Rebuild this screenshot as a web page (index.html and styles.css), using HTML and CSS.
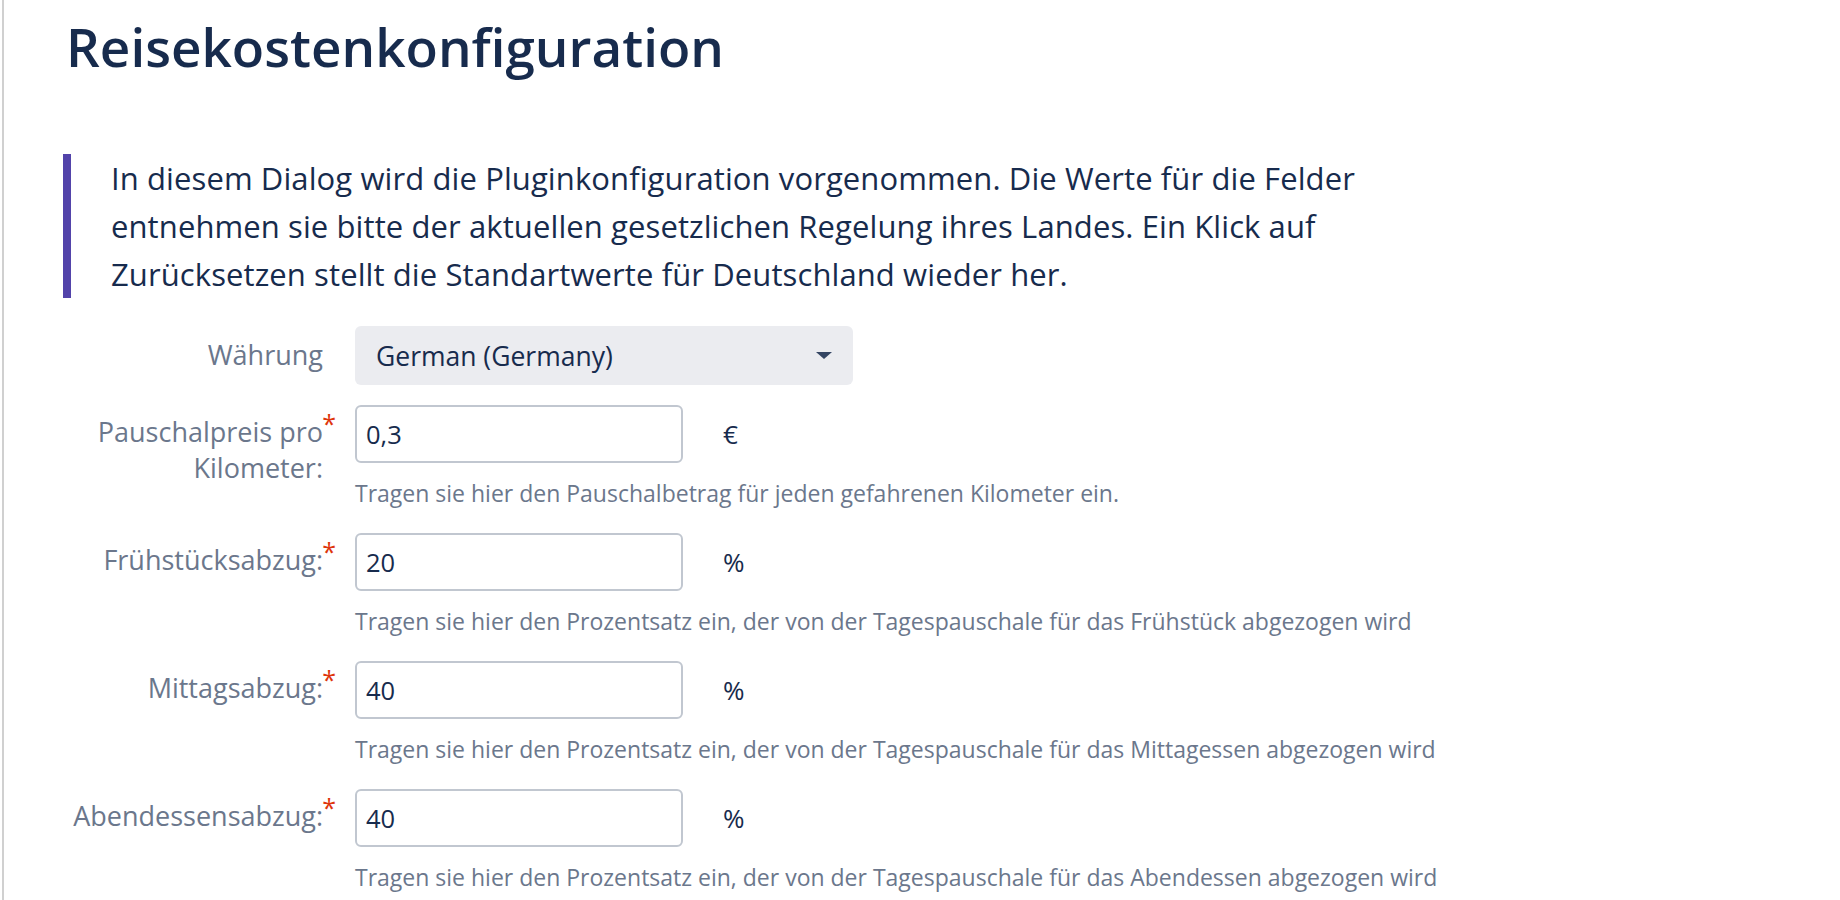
FILE: index.html
```html
<!DOCTYPE html>
<html lang="de">
<head>
<meta charset="utf-8">
<title>Reisekostenkonfiguration</title>
<link rel="stylesheet" href="styles.css">
</head>
<body>
<div class="page">
  <h1 class="title">Reisekostenkonfiguration</h1>
  <blockquote class="intro">
    <p>In diesem Dialog wird die Pluginkonfiguration vorgenommen. Die Werte für die Felder entnehmen sie bitte der aktuellen gesetzlichen Regelung ihres Landes. Ein Klick auf Zurücksetzen stellt die Standartwerte für Deutschland wieder her.</p>
  </blockquote>
  <form class="config">
    <div class="field field-select">
      <label class="label">Währung</label>
      <div class="control">
        <div class="select"><span class="select-value">German (Germany)</span><span class="caret"></span></div>
      </div>
    </div>
    <div class="field">
      <label class="label">Pauschalpreis pro Kilometer:<span class="req">*</span></label>
      <div class="control">
        <div class="input-row"><input class="text" type="text" value="0,3"><span class="unit">€</span></div>
        <div class="hint">Tragen sie hier den Pauschalbetrag für jeden gefahrenen Kilometer ein.</div>
      </div>
    </div>
    <div class="field">
      <label class="label">Frühstücksabzug:<span class="req">*</span></label>
      <div class="control">
        <div class="input-row"><input class="text" type="text" value="20"><span class="unit">%</span></div>
        <div class="hint">Tragen sie hier den Prozentsatz ein, der von der Tagespauschale für das Frühstück abgezogen wird</div>
      </div>
    </div>
    <div class="field">
      <label class="label">Mittagsabzug:<span class="req">*</span></label>
      <div class="control">
        <div class="input-row"><input class="text" type="text" value="40"><span class="unit">%</span></div>
        <div class="hint">Tragen sie hier den Prozentsatz ein, der von der Tagespauschale für das Mittagessen abgezogen wird</div>
      </div>
    </div>
    <div class="field">
      <label class="label">Abendessensabzug:<span class="req">*</span></label>
      <div class="control">
        <div class="input-row"><input class="text" type="text" value="40"><span class="unit">%</span></div>
        <div class="hint">Tragen sie hier den Prozentsatz ein, der von der Tagespauschale für das Abendessen abgezogen wird</div>
      </div>
    </div>
  </form>
</div>
</body>
</html>
```

FILE: styles.css
```css
html, body {
  margin: 0;
  padding: 0;
  background: #ffffff;
}

body {
  font-family: "Open Sans", "Noto Sans", "Liberation Sans", sans-serif;
  color: #172b4d;
  overflow: hidden;
}

.page {
  margin-left: 2px;
  border-left: 2px solid #d0d0d0;
  min-height: 900px;
  padding-left: 59px;
  box-sizing: border-box;
}

.title {
  margin: 0;
  padding-top: 17px;
  margin-left: 3px;
  font-size: 53px;
  line-height: 60px;
  font-weight: 600;
  color: #172b4d;
}

.intro {
  margin: 77px 0 0 0;
  border-left: 8px solid #5243aa;
  padding-left: 40px;
}

.intro p {
  margin: 0;
  max-width: 1300px;
  font-size: 31px;
  letter-spacing: 0.1px;
  line-height: 48px;
  color: #172b4d;
}

.config {
  margin-top: 28px;
  display: flex;
  flex-direction: column;
  gap: 20px;
}

.field {
  display: grid;
  grid-template-columns: 262px 498px;
  column-gap: 30px;
  align-items: start;
}

.label {
  position: relative;
  text-align: right;
  padding-right: 2px;
  padding-top: 9px;
  font-size: 27px;
  line-height: 36px;
  color: #6b778c;
}

.field-select .label {
  padding-top: 11px;
}

.req {
  position: absolute;
  right: -11px;
  top: 6px;
  font-size: 25px;
  line-height: 25px;
  color: #de350b;
}

.select {
  height: 59px;
  background: #ebecf0;
  border-radius: 6px;
  display: flex;
  align-items: center;
  justify-content: space-between;
  padding: 0 21px 0 21px;
  box-sizing: border-box;
}

.select-value {
  font-size: 26.5px;
  line-height: 36px;
  color: #172b4d;
}

.caret {
  width: 0;
  height: 0;
  border-left: 8px solid transparent;
  border-right: 8px solid transparent;
  border-top: 7px solid #344563;
}

.input-row {
  display: flex;
  align-items: center;
  gap: 40px;
}

.text {
  width: 328px;
  height: 58px;
  box-sizing: border-box;
  border: 2px solid #c1c7d0;
  border-radius: 6px;
  padding: 0 9px;
  font-family: inherit;
  font-size: 25.5px;
  color: #172b4d;
  background: #ffffff;
  outline: none;
  margin: 0;
}

.unit {
  font-size: 26px;
  line-height: 36px;
  color: #172b4d;
}

.hint {
  margin-top: 14px;
  margin-bottom: 4px;
  font-size: 23px;
  line-height: 32px;
  color: #6b778c;
  white-space: nowrap;
}
```
